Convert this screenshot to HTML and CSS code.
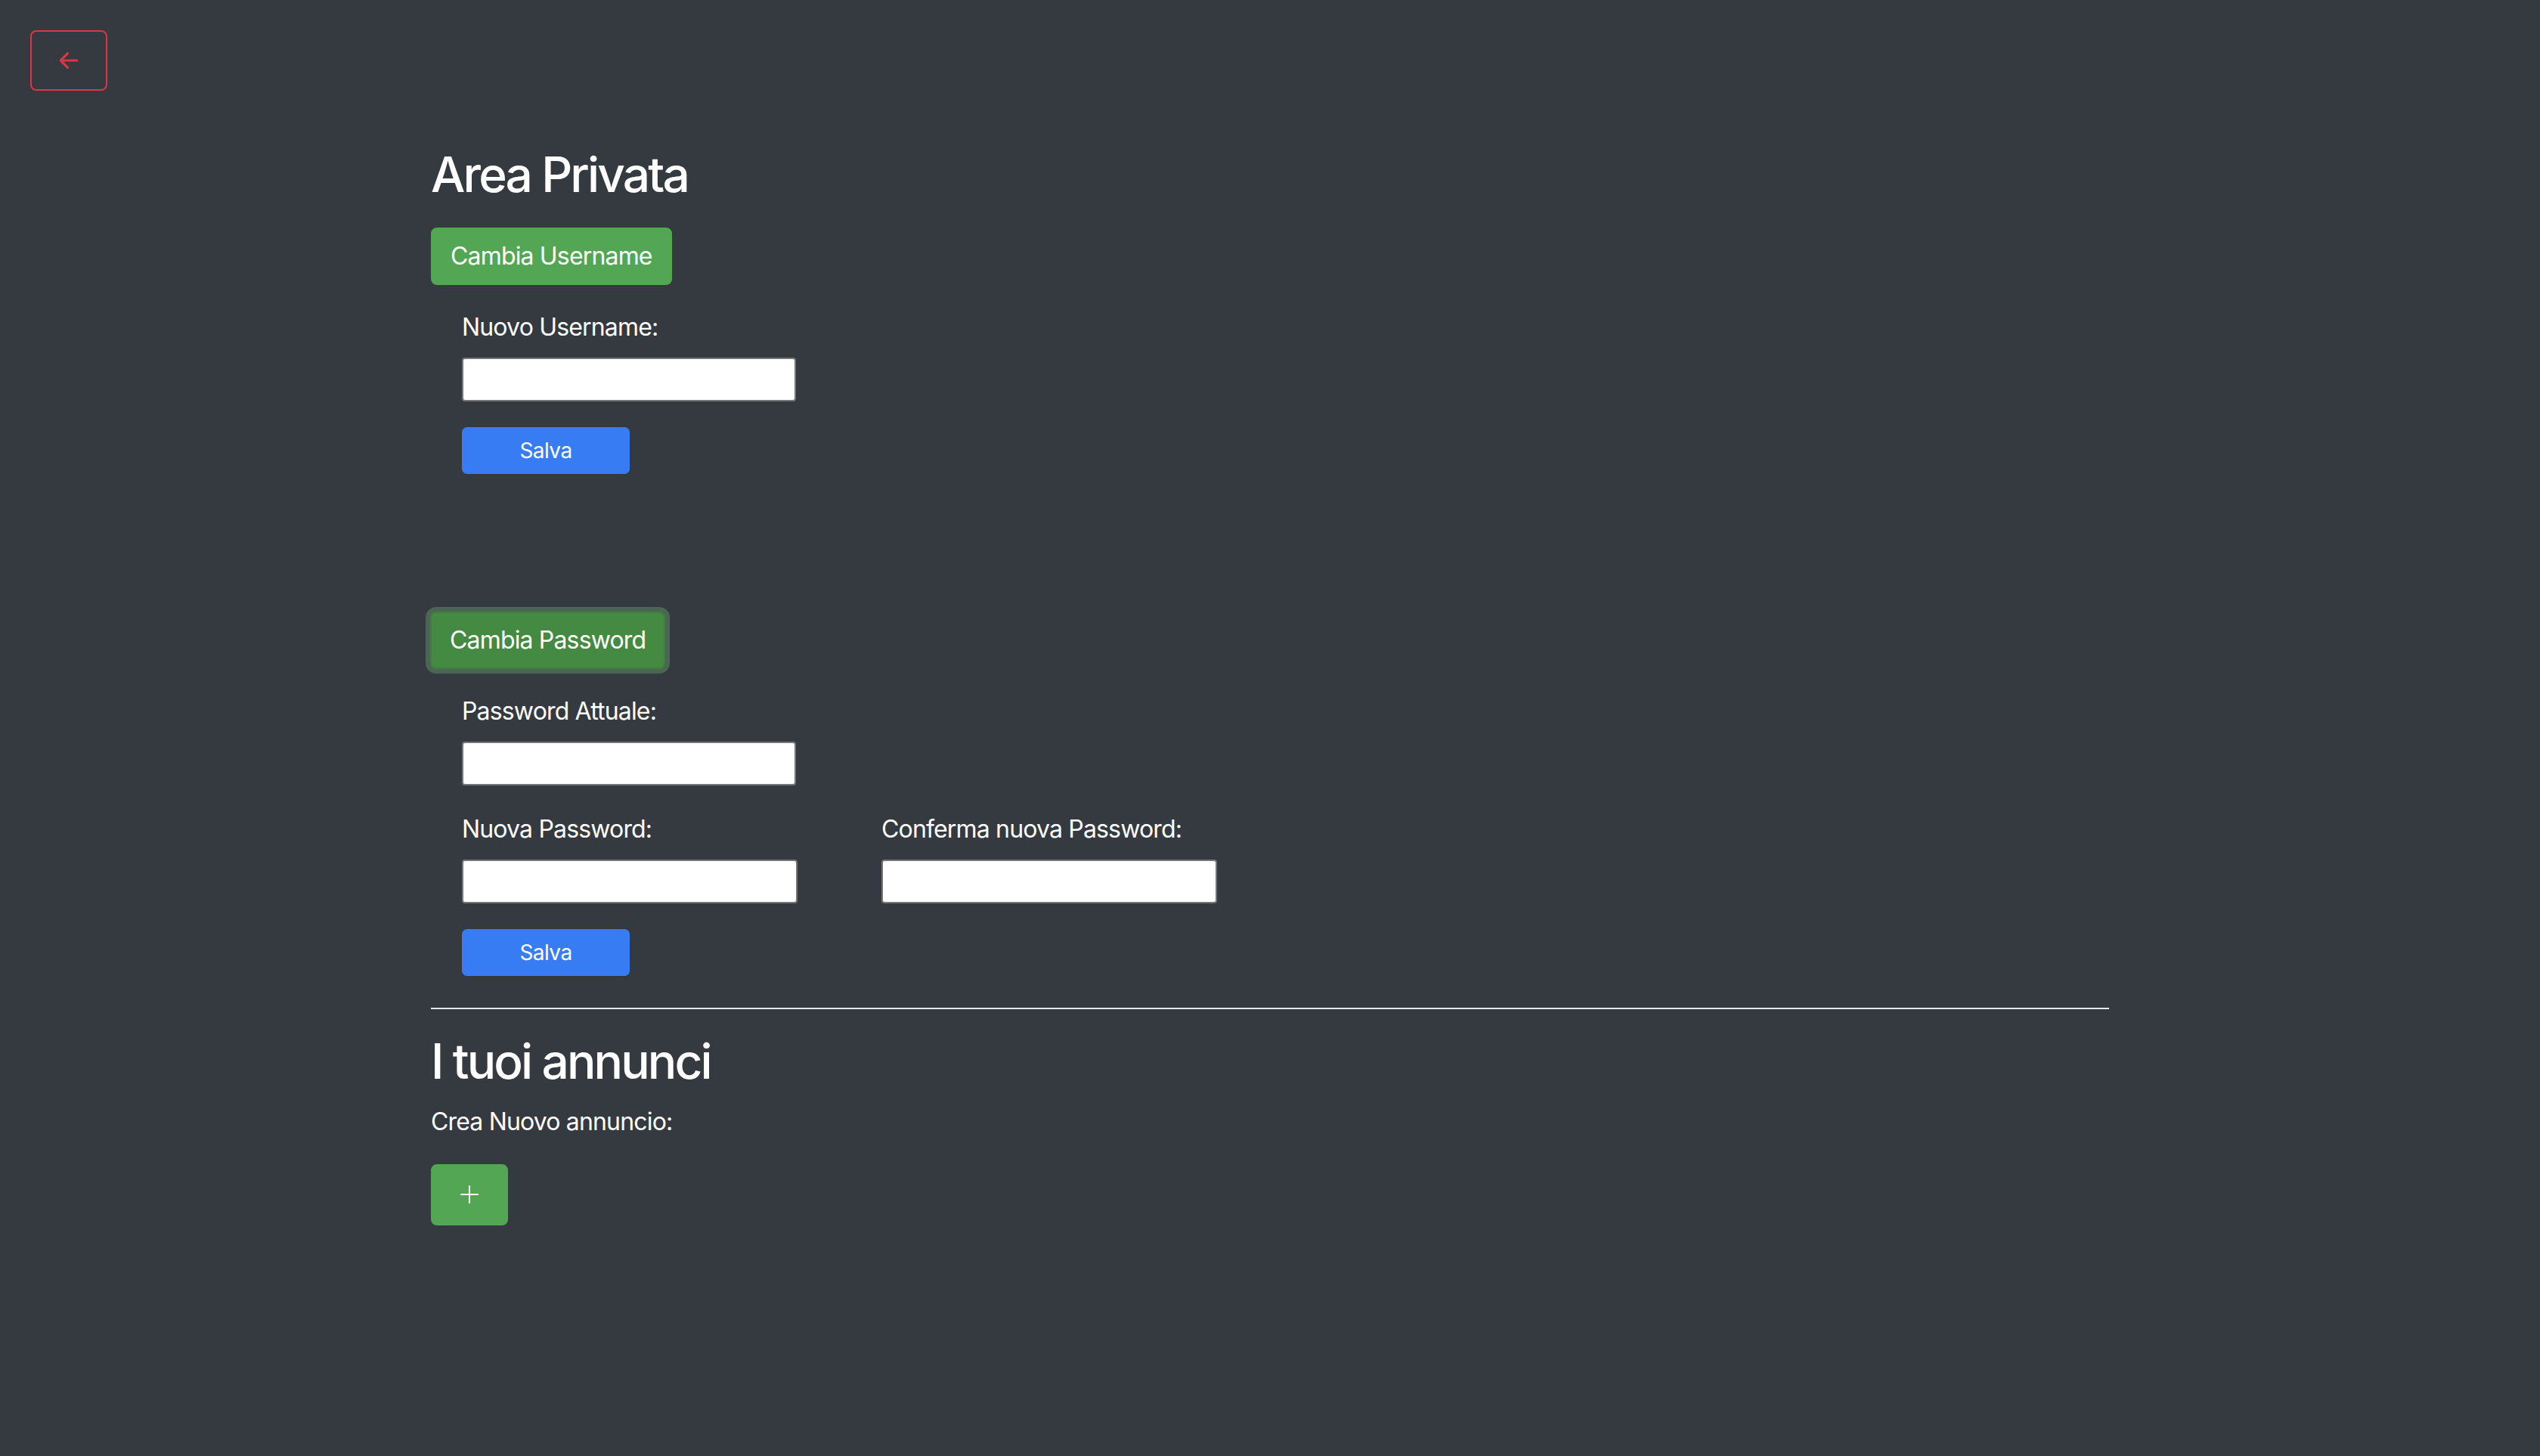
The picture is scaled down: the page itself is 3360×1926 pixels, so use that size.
FILE: index.html
```html
<!DOCTYPE html>
<html lang="it">
<head>
<meta charset="utf-8">
<title>Area Privata</title>
<link rel="stylesheet" href="styles.css">
</head>
<body>
<div class="topbar">
  <a class="btn-back" href="#" aria-label="Indietro">
    <svg viewBox="0 0 16 16" width="50" height="50" fill="currentColor"><path fill-rule="evenodd" d="M12 8a.5.5 0 0 1-.5.5H5.707l2.147 2.146a.5.5 0 0 1-.708.708l-3-3a.5.5 0 0 1 0-.708l3-3a.5.5 0 1 1 .708.708L5.707 7.5H11.5a.5.5 0 0 1 .5.5z"/></svg>
  </a>
</div>
<main class="container">
  <h2 class="title">Area Privata</h2>

  <section class="block block-user">
    <button class="btn-green" type="button">Cambia Username</button>
    <form class="form">
      <div class="field">
        <label for="u">Nuovo Username:</label>
        <input id="u" class="input" type="text">
      </div>
      <button class="btn-blue" type="button">Salva</button>
    </form>
  </section>

  <section class="block block-pass">
    <button class="btn-green active" type="button">Cambia Password</button>
    <form class="form">
      <div class="field">
        <label for="p0">Password Attuale:</label>
        <input id="p0" class="input" type="password">
      </div>
      <div class="field-row">
        <div class="field">
          <label for="p1">Nuova Password:</label>
          <input id="p1" class="input wide" type="password">
        </div>
        <div class="field">
          <label for="p2">Conferma nuova Password:</label>
          <input id="p2" class="input wide" type="password">
        </div>
      </div>
      <button class="btn-blue" type="button">Salva</button>
    </form>
  </section>

  <hr class="divider">

  <h2 class="title title-ads">I tuoi annunci</h2>
  <p class="lead-text">Crea Nuovo annuncio:</p>
  <button class="btn-plus" type="button" aria-label="Nuovo annuncio">
    <svg viewBox="0 0 16 16" width="32" height="32" fill="currentColor"><path fill-rule="evenodd" d="M8 2a.5.5 0 0 1 .5.5v5h5a.5.5 0 0 1 0 1h-5v5a.5.5 0 0 1-1 0v-5h-5a.5.5 0 0 1 0-1h5v-5A.5.5 0 0 1 8 2z"/></svg>
  </button>
</main>
</body>
</html>
```

FILE: styles.css
```css
* { box-sizing: border-box; }

html, body {
  margin: 0;
  padding: 0;
}

body {
  background: #343a40;
  color: #ffffff;
  font-family: Inter, "Noto Sans", "Liberation Sans", sans-serif;
  font-size: 32px;
  line-height: 1.5;
  letter-spacing: -0.026em;
  min-height: 1926px;
}

.topbar {
  padding: 40px 0 0 40px;
  height: 120px;
}

.btn-back {
  display: flex;
  align-items: center;
  justify-content: center;
  width: 102px;
  height: 80px;
  border: 2px solid #dc3545;
  border-radius: 8px;
  color: #dc3545;
}

.container {
  width: 2220px;
  margin: 0 auto;
}

.title {
  margin: 73px 0 31px;
  font-size: 64px;
  font-weight: 500;
  line-height: 1.2;
  letter-spacing: -0.045em;
}

.title-ads {
  margin: 0 0 17px;
}

.btn-green {
  display: inline-block;
  font-family: inherit;
  font-size: 32px;
  letter-spacing: -0.026em;
  line-height: 48px;
  padding: 12px 24px;
  border: 2px solid #53a653;
  border-radius: 8px;
  background: #53a653;
  color: #fff;
  cursor: pointer;
}

.btn-green.active {
  background: #458a43;
  border-color: #3f7f3d;
  box-shadow: 0 0 0 6px rgba(98, 148, 104, 0.5);
}

.block-pass {
  margin-top: 182px;
}

.block-pass .btn-green {
  margin-left: -1px;
}

.form {
  display: flex;
  flex-direction: column;
  align-items: flex-start;
  gap: 34px;
  padding: 32px 0 0 41px;
}

.field {
  display: flex;
  flex-direction: column;
  gap: 16px;
}

.field label {
  display: block;
  line-height: 48px;
}

.field-row {
  display: flex;
  gap: 111px;
}

.input {
  display: block;
  width: 442px;
  height: 58px;
  margin: 0;
  padding: 2px 4px;
  border: 2px solid #767676;
  border-radius: 4px;
  background: #fff;
  font-family: inherit;
  font-size: 26px;
}

.input.wide {
  width: 444px;
}

.btn-blue {
  width: 222px;
  height: 62px;
  padding: 8px 16px;
  border: 2px solid #387cf4;
  border-radius: 7px;
  background: #387cf4;
  color: #fff;
  font-family: inherit;
  font-size: 28px;
  letter-spacing: -0.02em;
  line-height: 42px;
  cursor: pointer;
}

.divider {
  margin: 42px 0 31px;
  border: 0;
  border-top: 2px solid #e6e6e6;
  height: 0;
}

.lead-text {
  margin: 0 0 32px;
  line-height: 48px;
}

.btn-plus {
  display: flex;
  align-items: center;
  justify-content: center;
  width: 102px;
  height: 81px;
  padding: 0;
  border: 2px solid #53a653;
  border-radius: 8px;
  background: #53a653;
  color: #fff;
  cursor: pointer;
}
```
